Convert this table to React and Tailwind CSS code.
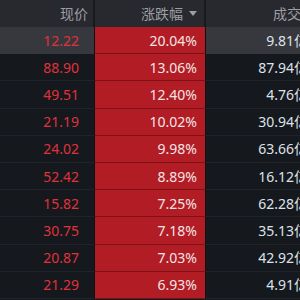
import React from "react";

const rows = [
  { price: "12.22", pct: "20.04%", vol: "9.81亿" },
  { price: "88.90", pct: "13.06%", vol: "87.94亿" },
  { price: "49.51", pct: "12.40%", vol: "4.76亿" },
  { price: "21.19", pct: "10.02%", vol: "30.94亿" },
  { price: "24.02", pct: "9.98%", vol: "63.66亿" },
  { price: "52.42", pct: "8.89%", vol: "16.12亿" },
  { price: "15.82", pct: "7.25%", vol: "62.28亿" },
  { price: "30.75", pct: "7.18%", vol: "35.13亿" },
  { price: "20.87", pct: "7.03%", vol: "42.92亿" },
  { price: "21.29", pct: "6.93%", vol: "4.91亿" },
];

const font = { fontFamily: '"Noto Sans", "Noto Sans CJK SC", sans-serif' };

export default function App() {
  return (
    <div className="w-[300px] h-[300px] overflow-hidden bg-[#15181d]" style={font}>
      <div className="w-[320px]">
        {/* header */}
        <div className="grid grid-cols-[95px_111px_114px] h-[27px] bg-[#28292e] text-[14px] text-[#9c9ea4]">
          <div className="flex items-center justify-end pr-[5px] border-r-2 border-[#17191d]">现价</div>
          <div className="flex items-center justify-end pr-[7px] gap-[6px] border-r-2 border-[#17191d]">
            <span>涨跌幅</span>
            <svg width="8" height="6" viewBox="0 0 8 6">
              <path d="M0 0 L8 0 L4 5 Z" fill="#9c9ea4" />
            </svg>
          </div>
          <div className="flex items-center justify-end pr-[5px]">成交额</div>
        </div>

        {/* rows */}
        {rows.map((r, i) => (
          <div
            key={i}
            className={`grid grid-cols-[95px_111px_114px] h-[27.2px] text-[14px] ${
              i === 0 ? "bg-[#37383d]" : "bg-[#15181d]"
            }`}
          >
            <div
              className={`flex items-center justify-end pr-[15px] text-[#e0323b] border-r border-[#0e1014] ${
                i === 0 ? "" : "border-b border-b-[#20232a]"
              }`}
            >
              {r.price}
            </div>
            <div className="flex items-center justify-end pr-[8px] bg-[#b21c25] text-[#f2e4e4] border-b border-b-[#7c1218] border-r border-r-[#0e1014]">
              {r.pct}
            </div>
            <div
              className={`flex items-center justify-end pr-[12px] text-[#dde2ea] ${
                i === 0 ? "" : "border-b border-b-[#20232a]"
              }`}
            >
              {r.vol}
            </div>
          </div>
        ))}
      </div>
    </div>
  );
}
